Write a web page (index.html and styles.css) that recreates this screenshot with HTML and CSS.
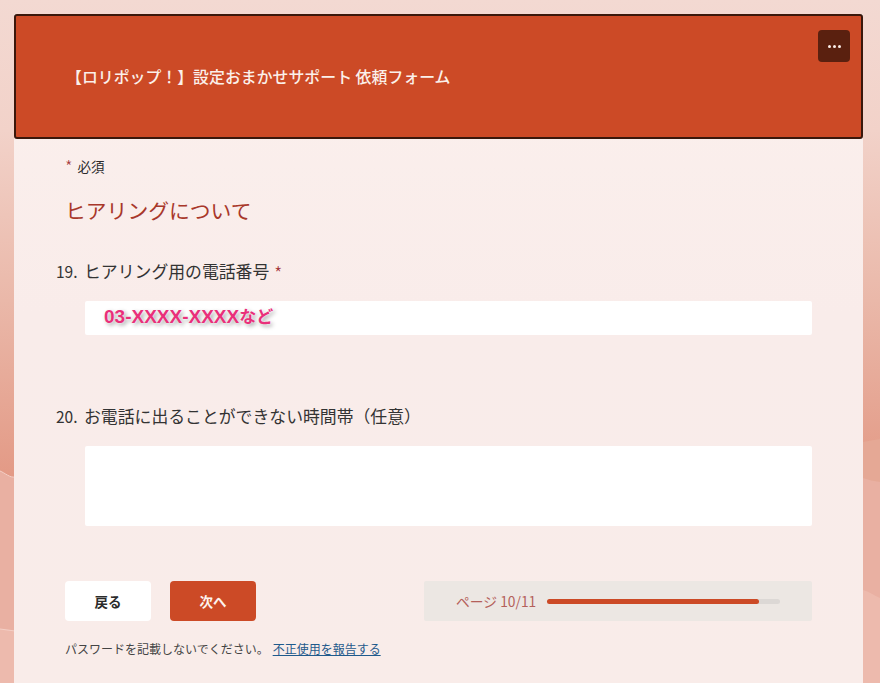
FILE: index.html
```html
<!DOCTYPE html>
<html lang="ja">
<head>
<meta charset="utf-8">
<title>依頼フォーム</title>
<link rel="stylesheet" href="styles.css">
</head>
<body>
<div class="bg-waves" aria-hidden="true">
  <svg width="880" height="683" viewBox="0 0 880 683">
    <path class="wave-a" d="M0 471 C5 473 10 478 15 477 L15 683 L0 683 Z"/>
    <path class="wave-line" d="M0 471 C5 473 10 478 15 477"/>
    <path class="wave-b" d="M0 629 L15 631 L15 683 L0 683 Z"/>
    <path class="wave-line" d="M0 629 L15 631"/>
    <path class="wave-c" d="M863 442 C868 441 874 440 880 439 L880 683 L863 683 Z"/>
    <path class="wave-a" d="M863 478 C868 480 874 481 880 482 L880 683 L863 683 Z"/>
    <path class="wave-b" d="M863 590 C870 592 875 596 880 598 L880 683 L863 683 Z"/>
  </svg>
</div>
<main class="form">
  <header class="banner">
    <h1 class="banner-title">【ロリポップ！】設定おまかせサポート 依頼フォーム</h1>
    <button class="more" aria-label="その他"><span></span><span></span><span></span></button>
  </header>
  <div class="content">
    <p class="required"><span class="star">*</span><span>必須</span></p>
    <h2 class="section">ヒアリングについて</h2>

    <section class="question q19">
      <div class="q-label"><span class="q-num">19.</span><span>ヒアリング用の電話番号 <span class="star">*</span></span></div>
      <div class="input short"><span class="hint"><span class="hint-latin">03-XXXX-XXXX</span>など</span></div>
    </section>

    <section class="question q20">
      <div class="q-label"><span class="q-num">20.</span><span>お電話に出ることができない時間帯（任意）</span></div>
      <div class="input tall"></div>
    </section>

    <div class="actions">
      <button class="btn back">戻る</button>
      <button class="btn next">次へ</button>
      <div class="progress">
        <span class="page">ページ 10/11</span>
        <div class="track"><div class="fill" style="width:91%"></div></div>
      </div>
    </div>
    <p class="footer">パスワードを記載しないでください。<a href="#">不正使用を報告する</a></p>
  </div>
</main>
</body>
</html>
```
FILE: styles.css
```css
* { box-sizing: border-box; }
html, body { margin: 0; height: 683px; overflow: hidden; }
body {
  position: relative;
  font-family: "Noto Sans CJK JP", "Liberation Sans", sans-serif;
  color: #2b2b2b;
  background: linear-gradient(180deg, #f3d9d2 0, #f2d2c9 130px, #eab8a9 300px, #e39a86 475px, #e39a86 683px);
  padding: 14px 17px 0 14px;
}
.bg-waves { position: absolute; inset: 0; }
.bg-waves svg { display: block; }
.wave-a { fill: #e9b0a2; }
.wave-b { fill: #edbaad; }
.wave-c { fill: #e5a895; }
.wave-line { fill: none; stroke: #f4cfc6; stroke-width: 1; }
.form { position: relative; width: 849px; height: 669px; background: linear-gradient(180deg, #fbf0ed 0, #f9ecea 300px, #f9ece9 683px); }
.banner {
  position: relative;
  height: 125px;
  background: #cc4a26;
  border: 2px solid #3a170b;
  border-radius: 3px;
  display: flex;
  align-items: center;
  padding: 0 0 0 50px;
}
.banner-title { margin: 0; font-size: 15.9px; font-weight: 500; color: #fbf0ea; line-height: 20px; }
.more {
  position: absolute; top: 14px; right: 11px;
  width: 32px; height: 32px;
  background: #5a200f; border: 0; border-radius: 4px;
  display: flex; align-items: center; justify-content: center; gap: 2px; padding: 0;
}
.more span { width: 3px; height: 3px; border-radius: 50%; background: #fbeee8; }
.content { padding: 0 51px 0 42px; }
.required { display: flex; gap: 5px; margin: 17px 0 0 9px; font-size: 13.5px; line-height: 20px; color: #2b2b2b; }
.required .star { font-size: 17px; }
.star { color: #a4373a; font-weight: 300; }
.section { margin: 19px 0 0 9px; font-size: 20.8px; font-weight: 400; line-height: 30px; color: #a8372a; }
.question { margin: 0; }
.q19 { margin-top: 34px; }
.q20 { margin-top: 69px; }
.q-label { display: flex; height: 24px; font-size: 16.85px; line-height: 24px; color: #333; }
.q-label .star { font-size: 19px; line-height: 16px; margin-left: 1px; vertical-align: -3px; }
.q-num { width: 28px; flex: none; font-size: 15.5px; }
.input { margin: 18px 0 0 29px; background: #fff; border-radius: 2px; position: relative; }
.short { height: 34px; }
.tall { height: 80px; }
.hint {
  position: absolute; left: 19px; top: 0;
  font-size: 17px; font-weight: 700; line-height: 30px; color: #e9307a;
  text-shadow: 0 0 2px #fff, 2px 2px 4px rgba(0,0,0,.4);
  white-space: nowrap;
}
.hint-latin { font-family: "Liberation Sans", sans-serif; font-size: 19px; }
.actions { display: flex; align-items: stretch; margin: 55px 0 0 9px; height: 40px; }
.btn { width: 86px; border: 0; border-radius: 4px; font: 700 13.5px "Noto Sans CJK JP", sans-serif; }
.back { background: #fff; color: #2b2b2b; }
.next { background: #cc4a26; color: #fdf3ee; margin-left: 19px; }
.progress {
  margin-left: 168px; width: 388px;
  background: #ece7e3; border-radius: 2px;
  display: flex; align-items: center; padding: 0 32px 0 32px;
}
.page { font-size: 13.8px; color: #b4605a; white-space: nowrap; flex: none; width: 91px; }
.track { flex: 1; height: 5px; background: #dcd8d5; border-radius: 3px; }
.fill { height: 5px; background: #cc4a26; border-radius: 3px; }
.footer { margin: 18px 0 0 9px; font-size: 12px; line-height: 20px; color: #444; }
.footer a { color: #1f5a8c; margin-left: 4px; text-decoration: underline; }
```
